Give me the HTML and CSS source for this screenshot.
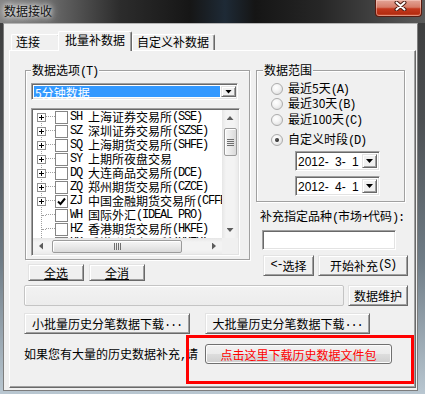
FILE: index.html
```html
<!DOCTYPE html>
<html lang="zh-CN">
<head>
<meta charset="utf-8">
<title>数据接收</title>
<link rel="stylesheet" href="styles.css">
</head>
<body>
<div class="window">
  <div class="titlebar">
    <span class="title">数据接收</span>
    <div class="close">
      <svg width="13" height="10" viewBox="0 0 13 10">
        <path d="M2.5 1.5 L10.5 8.5 M10.5 1.5 L2.5 8.5" stroke="#4a1c12" stroke-width="4" stroke-linecap="round"/>
        <path d="M2.5 1.5 L10.5 8.5 M10.5 1.5 L2.5 8.5" stroke="#ffffff" stroke-width="2" stroke-linecap="round"/>
      </svg>
    </div>
  </div>
  <div class="client">
    <div class="tabs">
      <div class="tab tab-1">连接</div>
      <div class="tab tab-active">批量补数据</div>
      <div class="tab tab-3">自定义补数据</div>
    </div>
    <div class="panel">
      <div class="top-row">
        <div class="left-col">
          <div class="group group-options">
            <span class="group-label">数据选项<span class="m">(T)</span></span>
            <div class="combo combo-main">
              <div class="combo-value selected">5分钟数据</div>
              <div class="drop-btn"><span class="tri"></span></div>
            </div>
            <div class="listbox">
              <div class="tree">
                <div class="node"><span class="exp plus"></span><span class="conn"></span><span class="chk"></span><span class="m code">SH</span><span class="name">上海证券交易所</span><span class="m">(SSE)</span></div>
                <div class="node"><span class="exp plus"></span><span class="conn"></span><span class="chk"></span><span class="m code">SZ</span><span class="name">深圳证券交易所</span><span class="m">(SZSE)</span></div>
                <div class="node"><span class="exp plus"></span><span class="conn"></span><span class="chk"></span><span class="m code">SQ</span><span class="name">上海期货交易所</span><span class="m">(SHFE)</span></div>
                <div class="node"><span class="exp plus"></span><span class="conn"></span><span class="chk"></span><span class="m code">SY</span><span class="name">上期所夜盘交易</span></div>
                <div class="node"><span class="exp plus"></span><span class="conn"></span><span class="chk"></span><span class="m code">DQ</span><span class="name">大连商品交易所</span><span class="m">(DCE)</span></div>
                <div class="node"><span class="exp plus"></span><span class="conn"></span><span class="chk"></span><span class="m code">ZQ</span><span class="name">郑州期货交易所</span><span class="m">(CZCE)</span></div>
                <div class="node"><span class="exp plus"></span><span class="conn"></span><span class="chk checked"><svg width="11" height="11" viewBox="0 0 11 11"><path d="M2 5.5 L4.5 8 L9 2.5" fill="none" stroke="#000" stroke-width="2"/></svg></span><span class="m code">ZJ</span><span class="name">中国金融期货交易所</span><span class="m">(CFFEX)</span></div>
                <div class="node"><span class="exp leaf"></span><span class="conn"></span><span class="chk"></span><span class="m code">WH</span><span class="name">国际外汇</span><span class="m">(IDEAL PRO)</span></div>
                <div class="node"><span class="exp leaf"></span><span class="conn"></span><span class="chk"></span><span class="m code">HZ</span><span class="name">香港期货交易所</span><span class="m">(HKFE)</span></div>
                <div class="node"><span class="exp leaf"></span><span class="conn"></span><span class="chk"></span><span class="m code">HK</span><span class="name">香港联合交易所</span><span class="m">(HKEX)</span></div>
              </div>
              <div class="vscroll">
                <div class="arr-box"><span class="arr arr-up"></span></div>
                <div class="thumb-v"><i></i></div>
                <div class="arr-box arr-end"><span class="arr arr-down"></span></div>
              </div>
              <div class="hscroll">
                <div class="arr-box"><span class="arr arr-left"></span></div>
                <div class="thumb-h"><i></i></div>
                <div class="arr-box arr-end-h"><span class="arr arr-right"></span></div>
              </div>
              <div class="corner"></div>
            </div>
          </div>
          <div class="btn-row-left">
            <button class="btn btn-sm"><u>全选</u></button>
            <button class="btn btn-sm"><u>全消</u></button>
          </div>
        </div>
        <div class="right-col">
          <div class="group group-range">
            <span class="group-label">数据范围</span>
            <div class="radio r1"><span class="rc"></span><span>最近5天<span class="m">(A)</span></span></div>
            <div class="radio r2"><span class="rc"></span><span>最近30天<span class="m">(B)</span></span></div>
            <div class="radio r3"><span class="rc"></span><span>最近100天<span class="m">(C)</span></span></div>
            <div class="radio r4"><span class="rc on"></span><span>自定义时段<span class="m">(D)</span></span></div>
            <div class="combo combo-date d1">
              <div class="combo-value date">2012- 3- 1</div>
              <div class="drop-btn"><span class="tri"></span></div>
            </div>
            <div class="combo combo-date d2">
              <div class="combo-value date">2012- 4- 1</div>
              <div class="drop-btn"><span class="tri"></span></div>
            </div>
          </div>
          <div class="field-label">补充指定品种<span class="m">(</span>市场<span class="m">+</span>代码<span class="m">):</span></div>
          <div class="textbox"></div>
          <div class="btn-row-right">
            <button class="btn btn-pick"><span class="m">&lt;-</span>选择</button>
            <button class="btn btn-start">开始补充<span class="m">(S)</span></button>
          </div>
        </div>
      </div>
      <div class="progress-row">
        <div class="progress"></div>
        <button class="btn btn-maint">数据维护</button>
      </div>
      <div class="dl-row">
        <button class="btn btn-dl1">小批量历史分笔数据下载<span class="m">...</span></button>
        <button class="btn btn-dl2">大批量历史分笔数据下载<span class="m">...</span></button>
      </div>
      <div class="note-row">
        <span class="note">如果您有大量的历史数据补充<span class="m">,</span>请</span>
        <button class="btn-aero">点击这里下载历史数据文件包</button>
      </div>
      <div class="annotation"></div>
    </div>
  </div>
</div>
</body>
</html>
```

FILE: styles.css
```css
* { box-sizing: border-box; }
html, body { margin: 0; padding: 0; }
body {
  width: 425px;
  height: 394px;
  overflow: hidden;
  font-family: "Noto Sans CJK SC", sans-serif;
  font-size: 12px;
  color: #000;
}
.m {
  font-family: "Liberation Mono", "Noto Sans CJK SC", monospace;
  letter-spacing: -1.2px;
}
.window {
  width: 425px;
  height: 394px;
  display: flex;
  flex-direction: column;
  background: linear-gradient(to bottom, #3a3a3a 0px, #4c4f52 120px, #6f7c86 260px, #b9c7d1 394px);
}
.titlebar {
  height: 23px;
  flex: none;
  display: flex;
  align-items: flex-start;
  background: linear-gradient(to right, #858585 0px, #6a6a6a 50px, #2c2c2c 120px, #161616 190px, #1e2a36 225px, #151515 255px, #262626 320px, #3f3f3f 370px, #5b5b5b 425px);
}
.title {
  padding: 3px 0 0 4px;
  line-height: 15px;
  color: #111;
  text-shadow: 0 0 5px #fff, 0 0 8px rgba(255,255,255,0.8), 0 0 12px rgba(255,255,255,0.5);
}
.close {
  margin-left: auto;
  margin-right: 3px;
  width: 47px;
  height: 17px;
  border: 1px solid #5a1b10;
  border-top: none;
  border-radius: 0 0 4px 4px;
  background: linear-gradient(to bottom, #e3a597 0%, #d67c68 45%, #c4391e 55%, #b52d12 85%, #d2593a 100%);
  box-shadow: inset 0 0 0 1px rgba(255,220,210,0.45);
  display: flex;
  justify-content: center;
  padding-top: 1px;
}
.close svg { display: block; margin-left: 3px; }

.client {
  width: 415px;
  height: 368px;
  margin: 0 7px 3px 3px;
  flex: none;
  background: #f0f0f0;
  border: 1px solid #7d7d7d;
  border-top-color: #b5b5b5;
  padding: 7px 1px 0 5px;
}
.tabs {
  height: 19px;
  display: flex;
  align-items: flex-end;
  padding-left: 2px;
}
.tab {
  background: #f0f0f0;
  border-top: 1px solid #fff;
  border-left: 1px solid #fff;
  border-right: 1px solid #696969;
  box-shadow: inset -1px 0 0 #a0a0a0;
  border-radius: 2px 2px 0 0;
  line-height: 13px;
  white-space: nowrap;
}
.tab-1 { width: 49px; height: 16px; padding-left: 4px; margin-right: -2px; }
.tab-active {
  width: 74px;
  height: 20px;
  margin-bottom: -1px;
  padding: 1px 0 0 6px;
  position: relative;
  z-index: 2;
}
.tab-3 { width: 83px; height: 16px; padding-left: 4px; }

.panel {
  position: relative;
  width: 407px;
  height: 338px;
  background: #f0f0f0;
  border: 1px solid;
  border-color: #fff #696969 #696969 #fff;
  box-shadow: inset -1px -1px 0 #a0a0a0;
  padding: 19px 0 0 14px;
}
.top-row { display: flex; align-items: flex-start; }
.left-col { width: 225px; margin-left: 1px; flex: none; }
.right-col { width: 152px; margin-left: 6px; flex: none; }

.group {
  position: relative;
  border: 1px solid #a0a0a0;
  box-shadow: inset 1px 1px 0 #fff, 1px 1px 0 #fff;
}
.group-label {
  position: absolute;
  top: -9px;
  padding: 0 1px;
  background: #f0f0f0;
  line-height: 15px;
  white-space: nowrap;
}
.group-options {
  width: 225px;
  height: 190px;
  padding: 12px 0 0 5px;
}
.group-options .group-label { left: 5px; }

.combo {
  display: flex;
  background: #fff;
  border: 1px solid;
  border-color: #a0a0a0 #fff #fff #a0a0a0;
  box-shadow: inset 1px 1px 0 #696969, inset -1px -1px 0 #e3e3e3;
  padding: 2px 2px 2px 2px;
}
.combo-main { width: 207px; height: 17px; padding: 2px 1px 2px 2px; }
.combo-value {
  flex: 1;
  line-height: 13px;
  white-space: nowrap;
}
.selected { background: #3399ff; color: #fff; padding-left: 1px; margin-right: 1px; }
.drop-btn {
  width: 15px;
  flex: none;
  background: #f0f0f0;
  border: 1px solid;
  border-color: #e3e3e3 #696969 #696969 #e3e3e3;
  box-shadow: inset 1px 1px 0 #fff, inset -1px -1px 0 #a0a0a0;
  display: flex;
  align-items: center;
  justify-content: center;
}
.tri {
  display: block;
  width: 7px;
  height: 4px;
  background: #000;
  clip-path: polygon(0 0, 100% 0, 50% 100%);
}

.listbox {
  margin-top: 8px;
  width: 209px;
  height: 148px;
  background: #fff;
  border: 1px solid;
  border-color: #a0a0a0 #fff #fff #a0a0a0;
  box-shadow: inset 1px 1px 0 #696969, inset -1px -1px 0 #e3e3e3;
  padding: 1px;
  display: grid;
  grid-template-columns: 189px 16px;
  grid-template-rows: 128px 16px;
}
.tree {
  position: relative;
  overflow: hidden;
  background: #fff;
}
.tree::before {
  content: "";
  position: absolute;
  left: 8px;
  top: 7px;
  bottom: 0;
  border-left: 1px dotted #a0a0a0;
}
.node {
  position: relative;
  height: 14px;
  display: flex;
  align-items: center;
  padding-left: 4px;
  white-space: nowrap;
  line-height: 14px;
}
.exp {
  position: relative;
  width: 9px;
  height: 9px;
  flex: none;
}
.exp.plus {
  border: 1px solid #919191;
  background: #fff;
}
.exp.plus::before {
  content: "";
  position: absolute;
  left: 1px;
  top: 3px;
  width: 5px;
  height: 1px;
  background: #000;
}
.exp.plus::after {
  content: "";
  position: absolute;
  left: 3px;
  top: 1px;
  width: 1px;
  height: 5px;
  background: #000;
}
.exp.leaf::after {
  content: "";
  position: absolute;
  left: 5px;
  top: 4px;
  width: 4px;
  border-top: 1px dotted #a0a0a0;
}
.conn {
  width: 9px;
  height: 1px;
  flex: none;
  border-top: 1px dotted #a0a0a0;
  margin-top: -1px;
}
.chk {
  width: 13px;
  height: 13px;
  flex: none;
  border: 1px solid #858585;
  background: #fff;
  display: flex;
  align-items: center;
  justify-content: center;
}
.chk svg { display: block; }
.code { margin-left: 2px; }
.name { margin-left: 6px; }

.vscroll {
  display: flex;
  flex-direction: column;
  background: linear-gradient(to right, #e6e6e6, #f3f3f3 25%, #f3f3f3 75%, #ebebeb);
}
.hscroll {
  display: flex;
  background: linear-gradient(to bottom, #e6e6e6, #f3f3f3 25%, #f3f3f3 75%, #ebebeb);
}
.corner { background: #f0f0f0; }
.arr-box {
  width: 16px;
  height: 16px;
  flex: none;
  display: flex;
  align-items: center;
  justify-content: center;
}
.arr-end { margin-top: auto; }
.arr-end-h { margin-left: auto; }
.arr { display: block; background: #5c5c5c; }
.arr-up { width: 7px; height: 4px; clip-path: polygon(50% 0, 100% 100%, 0 100%); }
.arr-down { width: 7px; height: 4px; clip-path: polygon(0 0, 100% 0, 50% 100%); }
.arr-left { width: 4px; height: 7px; clip-path: polygon(100% 0, 100% 100%, 0 50%); }
.arr-right { width: 4px; height: 7px; clip-path: polygon(0 0, 100% 50%, 0 100%); }
.thumb-v {
  margin: 2px 0 0 2px;
  width: 13px;
  height: 28px;
  border: 1px solid #9b9b9b;
  border-radius: 2px;
  background: linear-gradient(to right, #f6f6f6, #e9e9e9 50%, #dadada);
  box-shadow: inset 1px 1px 0 #fff;
  display: flex;
  align-items: center;
  justify-content: center;
}
.thumb-v i {
  display: block;
  width: 7px;
  height: 7px;
  background: repeating-linear-gradient(to bottom, #6e6e6e 0, #6e6e6e 1px, transparent 1px, transparent 2px);
}
.thumb-h {
  margin: 2px 0 0 3px;
  width: 130px;
  height: 13px;
  border: 1px solid #9b9b9b;
  border-radius: 2px;
  background: linear-gradient(to bottom, #f6f6f6, #e9e9e9 50%, #dadada);
  box-shadow: inset 1px 1px 0 #fff;
  display: flex;
  align-items: center;
  justify-content: center;
}
.thumb-h i {
  display: block;
  width: 7px;
  height: 7px;
  background: repeating-linear-gradient(to right, #6e6e6e 0, #6e6e6e 1px, transparent 1px, transparent 2px);
}

.btn {
  display: flex;
  align-items: center;
  justify-content: center;
  padding: 0;
  margin: 0;
  font: inherit;
  line-height: 13px;
  color: #000;
  background: #f0f0f0;
  border: 1px solid;
  border-color: #e3e3e3 #696969 #696969 #e3e3e3;
  box-shadow: inset 1px 1px 0 #fff, inset -1px -1px 0 #a0a0a0;
  white-space: nowrap;
}
.btn-row-left { display: flex; gap: 5px; margin-top: 4px; padding-left: 3px; }
.btn-sm { width: 56px; height: 17px; }

.group-range {
  width: 149px;
  height: 132px;
  padding: 10px 0 0 14px;
}
.group-range .group-label { left: 6px; }
.radio {
  display: flex;
  align-items: center;
  height: 15px;
  line-height: 15px;
  white-space: nowrap;
}
.r3 { margin-top: 1px; }
.r4 { margin-top: 5px; }
.rc {
  position: relative;
  width: 12px;
  height: 12px;
  flex: none;
  border-radius: 50%;
  border: 1px solid #acacac;
  background: radial-gradient(circle at 40% 35%, #ffffff 0, #f4f4f4 40%, #d6d6d6 100%);
  margin-right: 5px;
}
.rc.on::after {
  content: "";
  position: absolute;
  left: 3px;
  top: 3px;
  width: 4px;
  height: 4px;
  border-radius: 50%;
  background: radial-gradient(circle at 40% 40%, #5a5a5a, #0c0c0c);
}
.combo-date {
  width: 85px;
  height: 20px;
  margin-left: 24px;
}
.d1 { margin-top: 4px; }
.d2 { margin-top: 5px; }
.date {
  font-family: "Liberation Sans", sans-serif;
  font-size: 12px;
  word-spacing: 3px;
  white-space: pre;
  line-height: 16px;
}
.field-label {
  margin: 6px 0 0 4px;
  line-height: 15px;
  white-space: nowrap;
}
.textbox {
  margin: 4px 0 0 6px;
  width: 134px;
  height: 20px;
  background: #fff;
  border: 1px solid;
  border-color: #a0a0a0 #fff #fff #a0a0a0;
  box-shadow: inset 1px 1px 0 #696969, inset -1px -1px 0 #e3e3e3;
}
.btn-row-right { display: flex; gap: 4px; margin: 5px 0 0 7px; }
.btn-pick { width: 51px; height: 21px; }
.btn-start { width: 90px; height: 21px; }

.progress-row { display: flex; gap: 4px; margin-top: 4px; }
.progress {
  width: 320px;
  height: 21px;
  border: 1px solid #c4c4c4;
  border-radius: 2px;
  background: linear-gradient(to bottom, #f2f2f2, #ececec);
  box-shadow: inset 1px 1px 0 #fff;
}
.btn-maint { width: 60px; height: 21px; }
.dl-row { display: flex; gap: 15px; margin-top: 7px; }
.btn-dl1 { width: 166px; height: 21px; }
.btn-dl2 { width: 165px; height: 21px; }
.note-row { display: flex; align-items: center; margin-top: 10px; height: 20px; }
.note { width: 181px; flex: none; line-height: 15px; white-space: nowrap; padding-top: 1px; }
.btn-aero {
  width: 187px;
  height: 20px;
  padding: 0;
  margin: 0;
  font: inherit;
  line-height: 13px;
  color: #ff0000;
  border: 1px solid #707070;
  border-radius: 3px;
  background: linear-gradient(to bottom, #f2f2f2 0%, #ebebeb 50%, #dddddd 51%, #cfcfcf 100%);
  box-shadow: inset 0 0 0 1px #fcfcfc;
  white-space: nowrap;
}
.annotation {
  position: absolute;
  left: 176px;
  top: 284px;
  width: 228px;
  height: 49px;
  border: 3px solid #ff0000;
  pointer-events: none;
}
```
